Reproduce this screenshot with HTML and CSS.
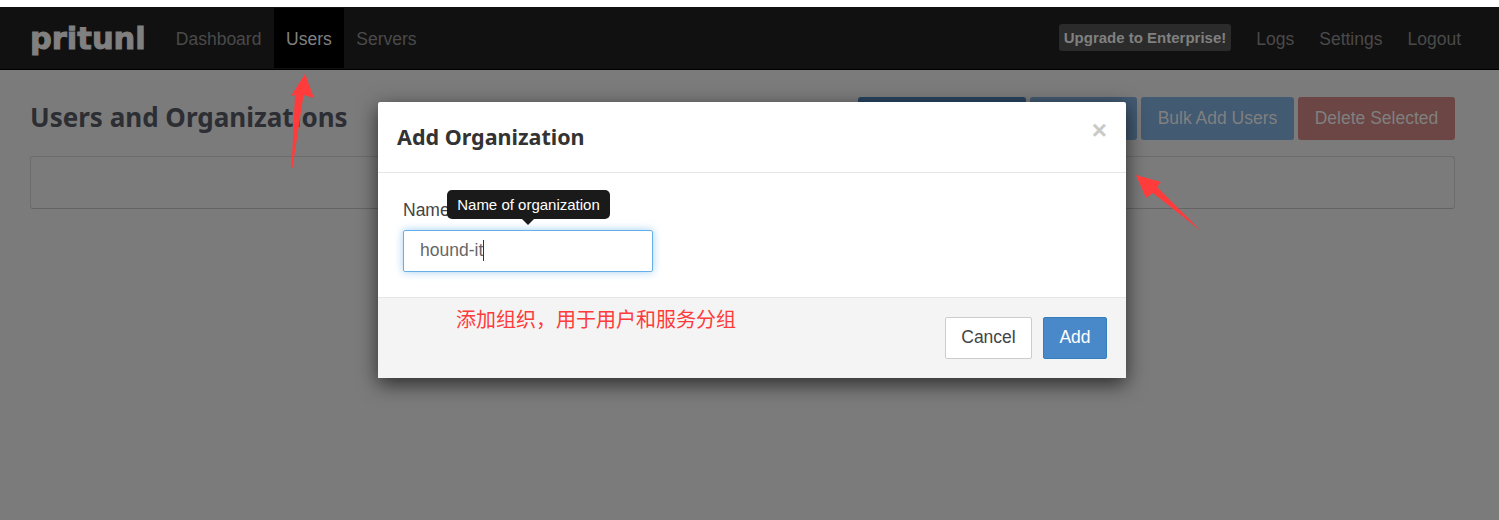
FILE: index.html
```html
<!DOCTYPE html>
<html lang="en">

<head>
  <meta charset="UTF-8">
  <meta name="viewport" content="width=device-width, initial-scale=1.0">
  <title>Users and Organizations</title>
  <link rel="stylesheet" href="styles.css">
</head>

<body>

  <div class="app">
    <nav class="navbar">
      <a class="brand">pritunl</a>
      <a class="nav-link">Dashboard</a>
      <a class="nav-link active">Users</a>
      <a class="nav-link">Servers</a>
      <a class="upgrade">Upgrade to Enterprise!</a>
      <a class="nav-link">Logs</a>
      <a class="nav-link">Settings</a>
      <a class="nav-link">Logout</a>
    </nav>

    <div class="content">
      <div class="page-header">
        <h1>Users and Organizations</h1>
        <div class="page-actions">
          <button class="page-btn btn-dark"></button>
          <button class="page-btn btn-faded"></button>
          <button class="page-btn btn-faded">Bulk Add Users</button>
          <button class="page-btn btn-delete">Delete Selected</button>
        </div>
      </div>
      <div class="panel"></div>
    </div>

    <div class="modal">
      <div class="modal-header">
        <h3>Add Organization</h3>
        <span class="close">×</span>
      </div>
      <div class="modal-body">
        <label class="field-label">Name</label>
        <div class="text-input">hound-it<span class="caret"></span></div>
        <div class="tooltip">Name of organization</div>
      </div>
      <div class="modal-footer">
        <button class="btn btn-cancel">Cancel</button>
        <button class="btn btn-add">Add</button>
      </div>
    </div>
  </div>

  <!-- anotacoes por cima da captura -->
  <svg class="arrows" width="1499" height="520" viewBox="0 0 1499 520">
    <path d="M305 74 L314 98 L303.500 95 L292.500 168 L291.500 168 L295 95 L291 96 Z" />
    <path d="M1136 175 L1161 182 L1157 187 L1201 231 L1153 193 L1146 198 Z" />
  </svg>
  <div class="note">添加组织，用于用户和服务分组</div>

</body>

</html>
```

FILE: styles.css
```css
* {
  box-sizing: border-box;
}

body {
  margin: 0;
  padding-top: 7px;
  background-color: #fff;
  font-family: "Liberation Sans", Arial, sans-serif;
  font-size: 17.5px;
  overflow: hidden;
}

.app {
  height: 513px;
  background-color: #7b7b7b;
}

/* Navbar */
.navbar {
  display: flex;
  align-items: stretch;
  height: 63px;
  padding: 1px 25.5px 1px 30px;
  background-color: #111;
  border-bottom: 1px solid #000;
  color: #4a4a4a;
}

.brand {
  width: 133.5px;
  font-family: "DejaVu Sans", sans-serif;
  font-weight: bold;
  font-size: 30.5px;
  line-height: 62px;
  color: #808080;
  -webkit-text-stroke: 1px #808080;
}

.nav-link {
  padding: 0 12.3px;
  line-height: 62px;
}

.upgrade ~ .nav-link {
  padding: 0 12.5px;
}

.nav-link.active {
  background-color: #000;
  color: #808080;
}

.upgrade {
  align-self: flex-start;
  margin: 16px 12.5px 0 auto;
  padding: 0 5px;
  height: 27px;
  border-radius: 3px;
  background-color: #2b2b2b;
  color: #808080;
  font-weight: bold;
  font-size: 15px;
  line-height: 27px;
}

/* Page under the dialog */
.content {
  padding: 27px 44px 0 30px;
}

.page-header {
  display: flex;
  justify-content: space-between;
  align-items: flex-start;
}

h1 {
  margin: 0;
  font-family: "Noto Sans", sans-serif;
  font-weight: 700;
  font-size: 26px;
  line-height: 40px;
  color: #2c2e33;
}

.page-actions {
  display: flex;
  gap: 4px;
}

.page-btn {
  height: 43px;
  padding: 0 16px;
  border: none;
  border-radius: 3px;
  font-family: inherit;
  font-size: 17.5px;
  color: #808080;
}

.btn-dark {
  width: 168px;
  background-color: #27445f;
}

.btn-faded {
  background-color: #425a72;
}

.btn-faded:nth-child(2) {
  width: 107px;
}

.btn-faded:nth-child(3) {
  width: 153px;
}

.btn-delete {
  width: 157px;
  background-color: #6b4644;
}

.panel {
  height: 53px;
  margin-top: 16px;
  border: 1px solid #6c6c6c;
  border-bottom-color: #646464;
  border-radius: 3px;
  background-color: #7b7b7b;
}

/* Dialog */
.modal {
  position: absolute;
  top: 102px;
  left: 378px;
  width: 748px;
  height: 276px;
  display: flex;
  flex-direction: column;
  background-color: #fff;
  border-radius: 2px;
  box-shadow: 0 6px 20px rgba(0, 0, 0, 0.65);
}

.modal-header {
  display: flex;
  justify-content: space-between;
  align-items: flex-start;
  height: 71px;
  padding: 19px 19px 0;
  border-bottom: 1px solid #e5e5e5;
}

h3 {
  margin: 0;
  font-family: "Noto Sans", sans-serif;
  font-weight: 700;
  font-size: 21.5px;
  line-height: 32px;
  color: #333;
}

.close {
  font-weight: bold;
  font-size: 26px;
  line-height: 19px;
  color: #c9c9c9;
}

.modal-body {
  position: relative;
  flex: 1;
  padding: 25px 25px 0;
}

.field-label {
  display: block;
  height: 32px;
  line-height: 24px;
  color: #444;
}

.text-input {
  width: 250px;
  height: 42px;
  padding-left: 16px;
  border: 1px solid #66afe9;
  border-radius: 2px;
  box-shadow: 0 0 8px rgba(102, 175, 233, 0.6);
  line-height: 39px;
  color: #666;
}

.caret {
  display: inline-block;
  width: 1px;
  height: 21px;
  vertical-align: -5px;
  background-color: #333;
}

.tooltip {
  position: absolute;
  top: 17px;
  left: 69px;
  width: 163px;
  height: 29px;
  border-radius: 5px;
  background-color: #1a1a1a;
  color: #fff;
  font-size: 15px;
  line-height: 29px;
  text-align: center;
}

.tooltip::after {
  content: "";
  position: absolute;
  top: 29px;
  left: 75px;
  border-width: 6px 6px 0;
  border-style: solid;
  border-color: #1a1a1a transparent transparent;
}

.modal-footer {
  display: flex;
  justify-content: flex-end;
  align-items: flex-start;
  gap: 11px;
  height: 81px;
  padding: 19px 19px 0;
  background-color: #f4f4f4;
  border-top: 1px solid #e5e5e5;
}

.btn {
  height: 42px;
  padding-bottom: 3px;
  border-radius: 2px;
  font-family: inherit;
  font-size: 17.5px;
}

.btn-cancel {
  width: 87px;
  border: 1px solid #ccc;
  background-color: #fff;
  color: #444;
}

.btn-add {
  width: 64px;
  border: 1px solid #357ebd;
  background-color: #4a89c9;
  color: #fff;
}

/* Annotations */
.arrows {
  position: absolute;
  top: 0;
  left: 0;
  fill: #ff3b3b;
  pointer-events: none;
}

.note {
  position: absolute;
  top: 304px;
  left: 456px;
  font-family: "Noto Sans CJK SC", sans-serif;
  font-size: 20px;
  line-height: 30px;
  color: #ff3b3b;
}
```
